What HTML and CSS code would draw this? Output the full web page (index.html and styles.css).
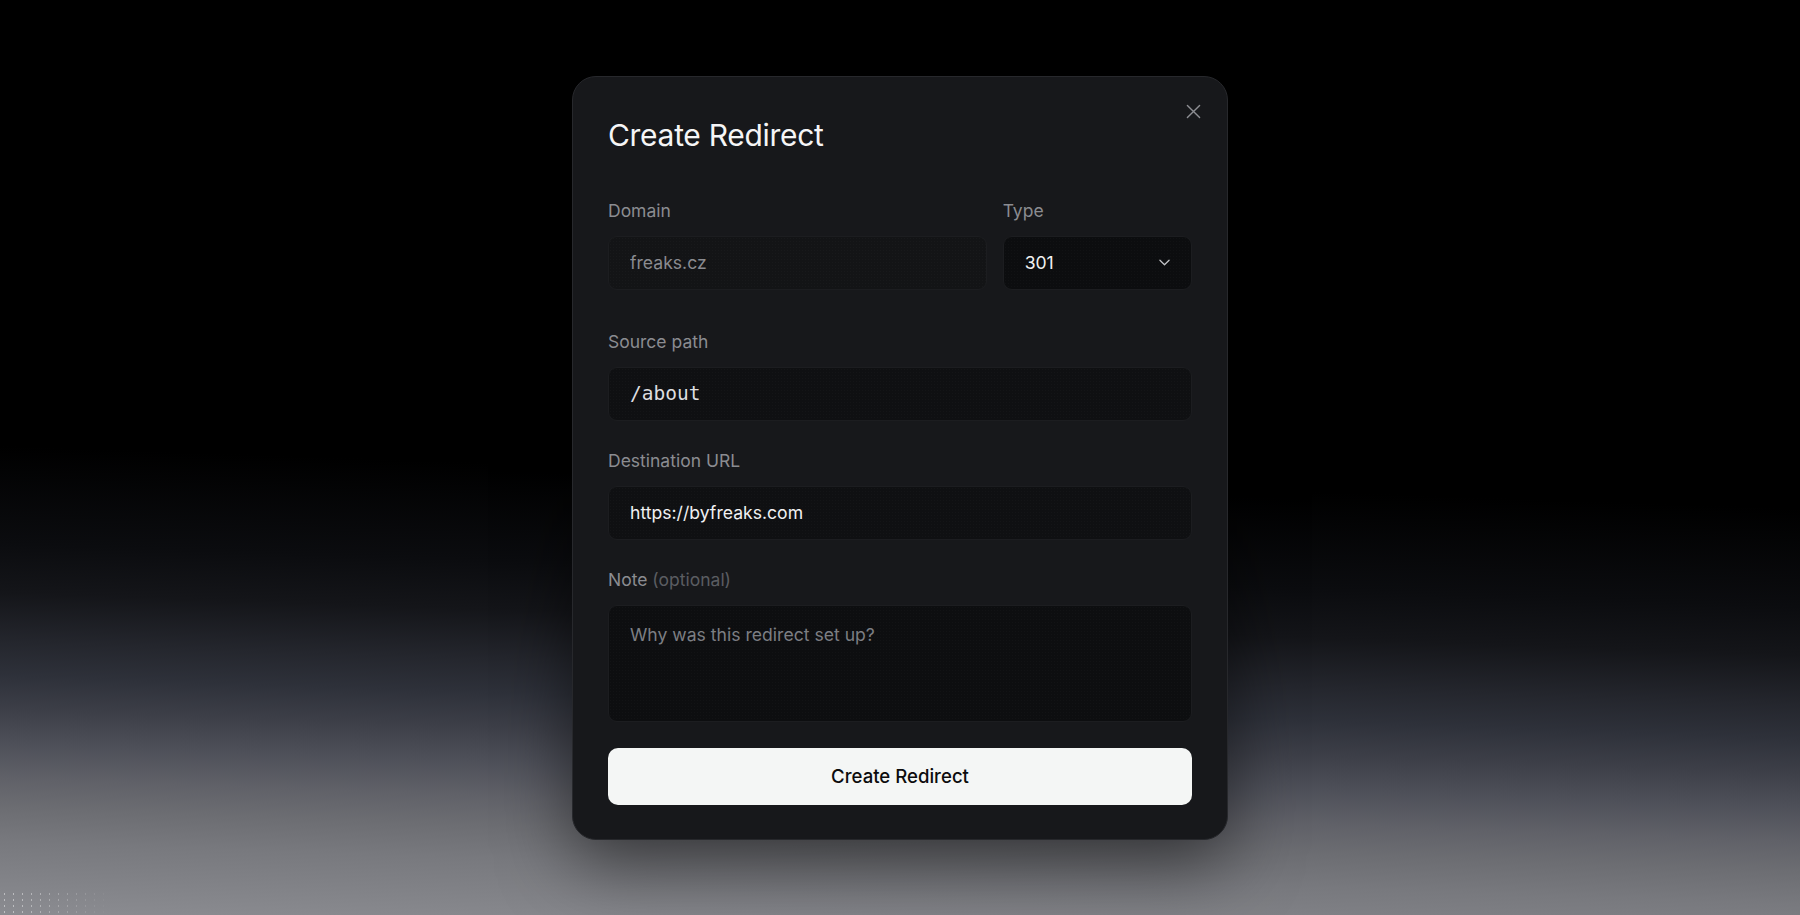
FILE: index.html
```html
<!DOCTYPE html>
<html lang="en">
<head>
    <meta charset="UTF-8">
    <meta name="viewport" content="width=device-width, initial-scale=1.0">
    <title>Create Redirect</title>
    <link rel="stylesheet" href="styles.css">
</head>
<body>
    <div class="modal">
        <button class="close" type="button" aria-label="Close">
            <svg viewBox="0 0 16 16" width="15" height="15"><path d="M1.5 1.5l13 13M14.5 1.5l-13 13"/></svg>
        </button>

        <h2 class="title">Create Redirect</h2>

        <form class="form" onsubmit="return false">
            <div class="fields">
                <div class="row">
                    <div class="field">
                        <label class="label" for="domain">Domain</label>
                        <input class="input input-disabled" id="domain" value="freaks.cz" disabled>
                    </div>
                    <div class="field">
                        <label class="label">Type</label>
                        <button class="input select" type="button">
                            <span>301</span>
                            <svg viewBox="0 0 12 7" width="11" height="7"><path d="M1 1l5 5 5-5"/></svg>
                        </button>
                    </div>
                </div>

                <div class="field">
                    <label class="label" for="source">Source path</label>
                    <input class="input input-mono" id="source" value="/about">
                </div>

                <div class="field">
                    <label class="label" for="dest">Destination URL</label>
                    <input class="input" id="dest" value="https://byfreaks.com">
                </div>

                <div class="field">
                    <label class="label" for="note">Note <span class="optional">(optional)</span></label>
                    <textarea class="input textarea" id="note" placeholder="Why was this redirect set up?"></textarea>
                </div>
            </div>

            <button class="submit" type="submit">Create Redirect</button>
        </form>
    </div>
</body>
</html>
```

FILE: styles.css
```css
body {
    margin: 0;
    height: 100vh;
    display: flex;
    justify-content: center;
    align-items: center;
    overflow: hidden;
    font-family: Inter, "Noto Sans", sans-serif;
    background: linear-gradient(182deg,
        #000 0%,
        #000 52%,
        #0b0c0f 62%,
        #141519 67%,
        #24262d 72%,
        #2e313a 75.5%,
        #3d3f48 79%,
        #4e5059 82.5%,
        #606168 86%,
        #6c6d72 89%,
        #78797e 92.5%,
        #8b8c91 100%);
}
/* little halftone speckle in the lower left corner */
body::before {
    content: "";
    position: fixed;
    left: 0;
    bottom: 0;
    width: 130px;
    height: 24px;
    background-image: radial-gradient(circle, rgba(255, 255, 255, 0.45) 0.7px, transparent 1.1px);
    background-size: 9px 6px;
    -webkit-mask-image: linear-gradient(100deg, #000 15%, transparent 85%);
    mask-image: linear-gradient(100deg, #000 15%, transparent 85%);
}

.modal {
    position: relative;
    width: 656px;
    box-sizing: border-box;
    padding: 40px 35px 34px;
    background: #17181b;
    border: 1px solid #27282c;
    border-radius: 24px;
    box-shadow: 0 24px 70px rgba(0, 0, 0, 0.5);
}

.close {
    position: absolute;
    top: 23px;
    right: 22px;
    width: 24px;
    height: 24px;
    padding: 0;
    border: none;
    background: none;
    display: flex;
    justify-content: center;
    align-items: center;
    cursor: pointer;
}
.close svg {
    fill: none;
    stroke: #8d8e93;
    stroke-width: 1.5;
    stroke-linecap: round;
}

.title {
    margin: 0 0 46px;
    font-size: 30px;
    line-height: 36px;
    font-weight: 400;
    letter-spacing: -0.01em;
    color: #f5f5f6;
}

.form {
    display: flex;
    flex-direction: column;
    gap: 26px;
}
.fields {
    display: flex;
    flex-direction: column;
    gap: 28px;
}
.row {
    display: grid;
    grid-template-columns: 2fr 1fr;
    gap: 16px;
    margin-bottom: 12px;
}
.field {
    display: flex;
    flex-direction: column;
    gap: 13px;
    min-width: 0;
}

.label {
    font-size: 17.5px;
    line-height: 24px;
    color: #8b8c91;
}
.optional {
    color: #5b5d62;
}

.input {
    box-sizing: border-box;
    width: 100%;
    height: 54px;
    margin: 0;
    padding: 0 21px;
    font-family: inherit;
    font-size: 17.6px;
    color: #f1f1f2;
    background-color: #0f1012;
    background-image: radial-gradient(rgba(255, 255, 255, 0.02) 0.6px, transparent 0.8px);
    background-size: 3px 3px;
    border: 1px solid #1c1d20;
    border-radius: 9px;
    outline: none;
}
.input-disabled {
    color: #8a8b90;
    background-color: #131416;
}
.input-mono {
    font-family: "DejaVu Sans Mono", "Liberation Mono", monospace;
    font-size: 19.5px;
    color: #dedee0;
}
.select {
    display: flex;
    justify-content: space-between;
    align-items: center;
    text-align: left;
    background-color: #0c0d0f;
    cursor: pointer;
}
.select svg {
    fill: none;
    stroke: #c2c3c7;
    stroke-width: 1.4;
    stroke-linecap: round;
    stroke-linejoin: round;
}
.textarea {
    height: 117px;
    padding: 17px 21px;
    line-height: 24px;
    resize: none;
    display: block;
    background-color: #0d0e10;
}
.textarea::placeholder {
    color: #7c7e83;
}

.submit {
    height: 57px;
    border: none;
    border-radius: 10px;
    background: #f4f6f5;
    color: #0c0c0d;
    font-family: inherit;
    font-size: 18.6px;
    font-weight: 500;
    cursor: pointer;
}
```
